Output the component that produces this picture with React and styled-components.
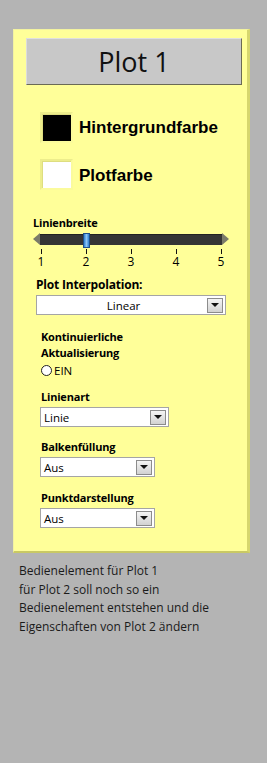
import React from "react";
import styled, { createGlobalStyle } from "styled-components";

const Global = createGlobalStyle`
  html, body {
    margin: 0;
    padding: 0;
    background: #b4b4b4;
  }
  body {
    font-family: "Liberation Sans", Arial, sans-serif;
    color: #000;
  }
`;

const Page = styled.div`
  width: 267px;
  height: 763px;
  padding: 29px 0 0 13px;
  box-sizing: border-box;
`;

const Panel = styled.div`
  width: 237px;
  height: 524px;
  box-sizing: border-box;
  background: #ffff99;
  border-top: 1px solid #f2f2a0;
  border-left: 1px solid #f2f2a0;
  border-right: 3px solid #d6d66e;
  border-bottom: 2px solid #c9c964;
  padding: 8px 0 0 12px;
  display: flex;
  flex-direction: column;
`;

const TitleButton = styled.div`
  width: 216px;
  height: 47px;
  box-sizing: border-box;
  background: #c8c8c8;
  border-top: 1px solid #e0e0e0;
  border-left: 1px solid #dcdcdc;
  border-right: 1px solid #6a6a55;
  border-bottom: 1px solid #6a6a55;
  display: flex;
  align-items: center;
  justify-content: center;
  font-family: "Open Sans", "Liberation Sans", sans-serif;
  font-size: 27px;
  color: #111;
`;

const SwatchRow = styled.div`
  display: flex;
  align-items: center;
  gap: 6px;
  margin: ${(p) => p.$top}px 0 0 14px;
`;

const Swatch = styled.div`
  width: 33px;
  height: 31px;
  box-sizing: border-box;
  border: 2px solid #eded8c;
  border-right-color: #fbfb9c;
  border-bottom-color: #fbfb9c;
  background: ${(p) => p.$color};
  box-shadow: inset 1px 1px 0 #dede80;
`;

const SwatchLabel = styled.span`
  font-weight: bold;
  font-size: 17px;
  margin-top: ${(p) => p.$shift || 0}px;
`;

const Label = styled.div`
  font-family: "Open Sans", "Liberation Sans", sans-serif;
  font-weight: bold;
  font-size: ${(p) => p.$size || 11}px;
  letter-spacing: -0.2px;
  line-height: 16px;
  margin: ${(p) => p.$top || 0}px 0 0 ${(p) => p.$left || 0}px;
`;

const SliderBox = styled.div`
  width: 196px;
  margin: 1px 0 0 7px;
  display: flex;
  flex-direction: column;
`;

const TrackRow = styled.div`
  display: flex;
  align-items: center;
  height: 14px;
`;

const Arrow = styled.div`
  width: 0;
  height: 0;
  border-top: 6px solid transparent;
  border-bottom: 6px solid transparent;
  ${(p) =>
    p.$dir === "left"
      ? "border-right: 7px solid #7b7b6a;"
      : "border-left: 7px solid #7b7b6a;"}
`;

const Track = styled.div`
  position: relative;
  flex: 1;
  height: 10px;
  background: #353535;
  border-top: 1px solid #222;
`;

const Thumb = styled.div`
  position: absolute;
  top: -2px;
  width: 5px;
  height: 13px;
  background: linear-gradient(to right, #2d7fd0, #8cc4f5 50%, #2d7fd0);
  border: 1px solid #1f4f8a;
`;

const Ticks = styled.div`
  display: flex;
  justify-content: space-between;
  padding: 3px 8px 0 8px;
`;

const Tick = styled.div`
  display: flex;
  flex-direction: column;
  align-items: center;
  width: 0;
  font-family: "Open Sans", "Liberation Sans", sans-serif;
  font-size: 12px;
  line-height: 13px;

  &::before {
    content: "";
    width: 1px;
    height: 5px;
    background: #111;
    margin-bottom: 1px;
  }
`;

const Select = styled.div`
  width: ${(p) => p.$width}px;
  height: 20px;
  box-sizing: border-box;
  margin-left: ${(p) => p.$left}px;
  margin-top: 2px;
  background: #fff;
  border: 1px solid #a5a5a5;
  display: flex;
  align-items: center;
  font-family: "Open Sans", "Liberation Sans", sans-serif;
  font-size: 11.5px;
`;

const SelectText = styled.span`
  flex: 1;
  padding-left: 3px;
  text-align: ${(p) => (p.$center ? "center" : "left")};
`;

const SelectButton = styled.div`
  width: 16px;
  height: 15px;
  margin-right: 2px;
  box-sizing: border-box;
  border: 1px solid #8c8c8c;
  background: linear-gradient(#f4f4f4, #d2d2d2);
  display: flex;
  align-items: center;
  justify-content: center;

  &::after {
    content: "";
    border-left: 4px solid transparent;
    border-right: 4px solid transparent;
    border-top: 4px solid #111;
  }
`;

const RadioRow = styled.div`
  display: flex;
  align-items: center;
  gap: 2px;
  margin: 2px 0 0 15px;
  font-family: "Open Sans", "Liberation Sans", sans-serif;
  font-size: 11.5px;
`;

const Radio = styled.div`
  width: 9px;
  height: 9px;
  border-radius: 50%;
  border: 1px solid #222;
  background: #fff;
`;

const Notes = styled.div`
  margin: 9px 0 0 6px;
  font-family: "Open Sans", "Liberation Sans", sans-serif;
  font-size: 12px;
  line-height: 18.5px;
  color: #1a1a1a;
`;

const Dropdown = ({ value, width, left, center }) => (
  <Select $width={width} $left={left}>
    <SelectText $center={center}>{value}</SelectText>
    <SelectButton />
  </Select>
);

export default function App() {
  const value = 2;
  const pct = ((value - 1) / 4) * 100;
  return (
    <Page>
      <Global />
      <Panel>
        <TitleButton>Plot 1</TitleButton>

        <SwatchRow $top={27}>
          <Swatch $color="#000" />
          <SwatchLabel>Hintergrundfarbe</SwatchLabel>
        </SwatchRow>
        <SwatchRow $top={16}>
          <Swatch $color="#fff" />
          <SwatchLabel $shift={3}>Plotfarbe</SwatchLabel>
        </SwatchRow>

        <Label $top={25} $left={7}>Linienbreite</Label>
        <SliderBox>
          <TrackRow>
            <Arrow $dir="left" />
            <Track>
              <Thumb style={{ left: `calc(${pct}% - 3px)` }} />
            </Track>
            <Arrow $dir="right" />
          </TrackRow>
          <Ticks>
            {[1, 2, 3, 4, 5].map((n) => (
              <Tick key={n}>{n}</Tick>
            ))}
          </Ticks>
        </SliderBox>

        <Label $top={9} $left={10} $size={12}>Plot Interpolation:</Label>
        <Dropdown value="Linear" width={190} left={10} center />

        <Label $top={14} $left={15}>
          Kontinuierliche
          <br />
          Aktualisierung
        </Label>
        <RadioRow>
          <Radio />
          EIN
        </RadioRow>

        <Label $top={11} $left={15}>Linienart</Label>
        <Dropdown value="Linie" width={129} left={14} />

        <Label $top={12} $left={15}>Balkenfüllung</Label>
        <Dropdown value="Aus" width={115} left={14} />

        <Label $top={13} $left={15}>Punktdarstellung</Label>
        <Dropdown value="Aus" width={115} left={14} />
      </Panel>
      <Notes>
        Bedienelement für Plot 1
        <br />
        für Plot 2 soll noch so ein
        <br />
        Bedienelement entstehen und die
        <br />
        Eigenschaften von Plot 2 ändern
      </Notes>
    </Page>
  );
}
